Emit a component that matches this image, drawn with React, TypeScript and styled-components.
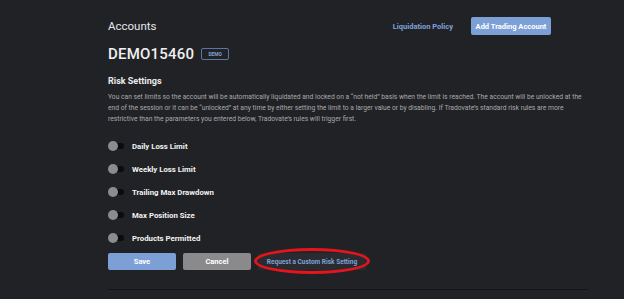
import React from "react";
import { styled, createGlobalStyle } from "styled-components";

const GlobalStyle = createGlobalStyle`
  html, body {
    margin: 0;
    padding: 0;
    background: #212226;
    font-family: Roboto, "Liberation Sans", sans-serif;
  }
`;

const Page = styled.div`
  width: 481px;
  padding: 17px 0 0 108px;
  display: flex;
  flex-direction: column;
  height: 282px;
  box-sizing: content-box;
`;

const Header = styled.div`
  display: flex;
  align-items: center;
  height: 18px;
`;

const Title = styled.div`
  flex: 1;
  color: #e6e6e6;
  font-size: 11.5px;
`;

const LinkText = styled.a`
  color: #7fa2d6;
  font-size: 7.5px;
  font-weight: 700;
  margin-right: 18px;
  cursor: pointer;
`;

const Button = styled.button<{ $variant: "primary" | "secondary" }>`
  border: none;
  border-radius: 2px;
  color: #ffffff;
  font-family: inherit;
  font-weight: 700;
  font-size: 7.5px;
  height: 18px;
  padding: 0;
  cursor: pointer;
  background: ${(p) => (p.$variant === "primary" ? "#7ca0d6" : "#8a8a8c")};
`;

const AddButton = styled(Button)`
  width: 80px;
  margin-right: 38px;
`;

const AccountRow = styled.div`
  display: flex;
  align-items: center;
  margin-top: 12px;
  height: 14px;
`;

const AccountName = styled.div`
  color: #f0f0f0;
  font-size: 15px;
  font-weight: 500;
  letter-spacing: 0.2px;
`;

const Badge = styled.span`
  margin-left: 7px;
  width: 28px;
  height: 12px;
  border: 1px solid #5a77a3;
  border-radius: 2px;
  box-sizing: border-box;
  color: #86a4d2;
  font-size: 4.8px;
  font-weight: 700;
  display: flex;
  align-items: center;
  justify-content: center;
`;

const SectionTitle = styled.div`
  margin-top: 15px;
  color: #ececec;
  font-size: 9px;
  font-weight: 700;
`;

const Description = styled.p`
  margin: 6px 0 0;
  color: #a9a9ab;
  font-size: 6.72px;
  line-height: 11px;
`;

const ToggleList = styled.div`
  display: flex;
  flex-direction: column;
  gap: 13px;
  margin-top: 16px;
`;

const ToggleRow = styled.div`
  display: flex;
  align-items: center;
  height: 10px;
`;

const Track = styled.span`
  position: relative;
  width: 16px;
  height: 10px;
  display: inline-flex;
  align-items: center;
`;

const Rail = styled.span`
  margin-left: 4px;
  width: 12px;
  height: 6px;
  border-radius: 3px;
  background: #0c0c0e;
`;

const Knob = styled.span`
  position: absolute;
  left: 0;
  top: 0;
  width: 10px;
  height: 10px;
  border-radius: 50%;
  background: #8b8b90;
`;

const ToggleLabel = styled.span`
  margin-left: 8px;
  color: #f2f2f2;
  font-size: 7.8px;
  font-weight: 700;
`;

const Actions = styled.div`
  display: flex;
  align-items: center;
  gap: 7px;
  margin-top: 10px;
`;

const ActionButton = styled(Button)`
  width: 68px;
  height: 17px;
`;

const CustomWrap = styled.div`
  position: relative;
`;

const CustomLink = styled.a`
  display: flex;
  align-items: center;
  justify-content: center;
  width: 108px;
  height: 17px;
  background: #2a2b30;
  border-radius: 2px;
  color: #7fa2d6;
  font-size: 6.5px;
  font-weight: 700;
  cursor: pointer;
`;

const Circle = styled.span`
  position: absolute;
  left: -4px;
  top: -5px;
  width: 116px;
  height: 26px;
  border: 3px solid #e8141c;
  border-radius: 50%;
  box-sizing: border-box;
  pointer-events: none;
`;

const Divider = styled.div`
  margin-top: 19px;
  width: 480px;
  height: 1px;
  background: #141518;
`;

const limits = [
  "Daily Loss Limit",
  "Weekly Loss Limit",
  "Trailing Max Drawdown",
  "Max Position Size",
  "Products Permitted",
];

export default function App() {
  return (
    <>
      <GlobalStyle />
      <Page>
        <Header>
          <Title>Accounts</Title>
          <LinkText>Liquidation Policy</LinkText>
          <AddButton $variant="primary">Add Trading Account</AddButton>
        </Header>
        <AccountRow>
          <AccountName>DEMO15460</AccountName>
          <Badge>DEMO</Badge>
        </AccountRow>
        <SectionTitle>Risk Settings</SectionTitle>
        <Description>
          You can set limits so the account will be automatically liquidated and
          locked on a “not held” basis when the limit is reached. The account
          will be unlocked at the end of the session or it can be “unlocked” at
          any time by either setting the limit to a larger value or by disabling.
          If Tradovate’s standard risk rules are more restrictive than the
          parameters you entered below, Tradovate’s rules will trigger first.
        </Description>
        <ToggleList>
          {limits.map((label) => (
            <ToggleRow key={label}>
              <Track>
                <Rail />
                <Knob />
              </Track>
              <ToggleLabel>{label}</ToggleLabel>
            </ToggleRow>
          ))}
        </ToggleList>
        <Actions>
          <ActionButton $variant="primary">Save</ActionButton>
          <ActionButton $variant="secondary">Cancel</ActionButton>
          <CustomWrap>
            <CustomLink>Request a Custom Risk Setting</CustomLink>
            <Circle />
          </CustomWrap>
        </Actions>
        <Divider />
      </Page>
    </>
  );
}
